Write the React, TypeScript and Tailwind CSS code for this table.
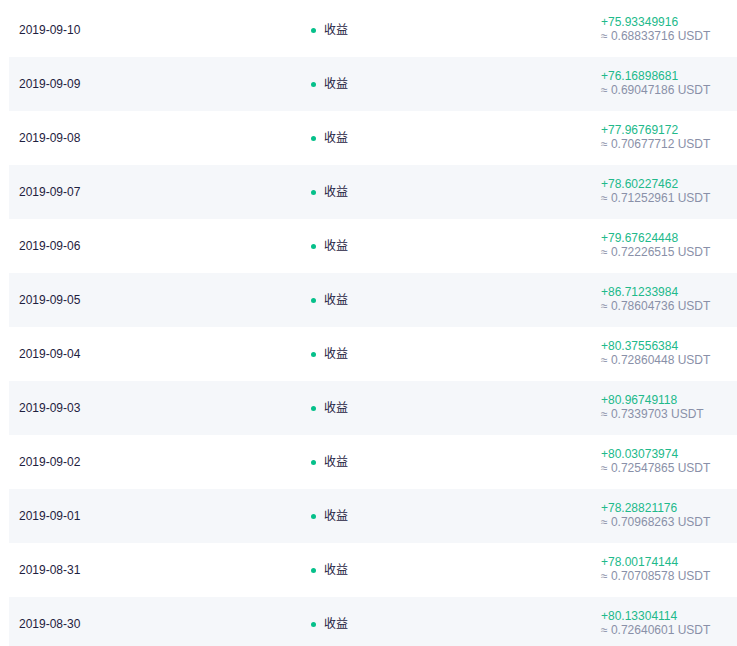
import * as React from 'react'

const rows = [
  { date: '2019-09-10', amount: '+75.93349916', usdt: '0.68833716' },
  { date: '2019-09-09', amount: '+76.16898681', usdt: '0.69047186' },
  { date: '2019-09-08', amount: '+77.96769172', usdt: '0.70677712' },
  { date: '2019-09-07', amount: '+78.60227462', usdt: '0.71252961' },
  { date: '2019-09-06', amount: '+79.67624448', usdt: '0.72226515' },
  { date: '2019-09-05', amount: '+86.71233984', usdt: '0.78604736' },
  { date: '2019-09-04', amount: '+80.37556384', usdt: '0.72860448' },
  { date: '2019-09-03', amount: '+80.96749118', usdt: '0.7339703' },
  { date: '2019-09-02', amount: '+80.03073974', usdt: '0.72547865' },
  { date: '2019-09-01', amount: '+78.28821176', usdt: '0.70968263' },
  { date: '2019-08-31', amount: '+78.00174144', usdt: '0.70708578' },
  { date: '2019-08-30', amount: '+80.13304114', usdt: '0.72640601' },
]

const App = () => {
  return (
    <div className="min-h-[646px] bg-white pt-[3px] pl-[9px] font-['Liberation_Sans','Noto_Sans_CJK_SC',sans-serif] text-[12px]">
      {rows.map((row, i) => (
        <div
          key={row.date}
          className={`grid h-[54px] grid-cols-[292px_290px_1fr] items-center px-[10px] ${
            i % 2 === 1 ? 'bg-[#f5f7fa]' : 'bg-white'
          }`}
        >
          {/* date */}
          <div className="text-[#1e2140]">{row.date}</div>

          {/* status */}
          <div className="flex items-center text-[#1e2140]">
            <span className="mr-[8px] h-[5px] w-[5px] rounded-full bg-[#05c08a]" />
            <span className="leading-[14px]">收益</span>
          </div>

          {/* amount */}
          <div className="pb-[2px] leading-[14px]">
            <div className="text-[#21b98a]">{row.amount}</div>
            <div className="text-[#8990a8]">≈ {row.usdt} USDT</div>
          </div>
        </div>
      ))}
    </div>
  )
}

export default App
